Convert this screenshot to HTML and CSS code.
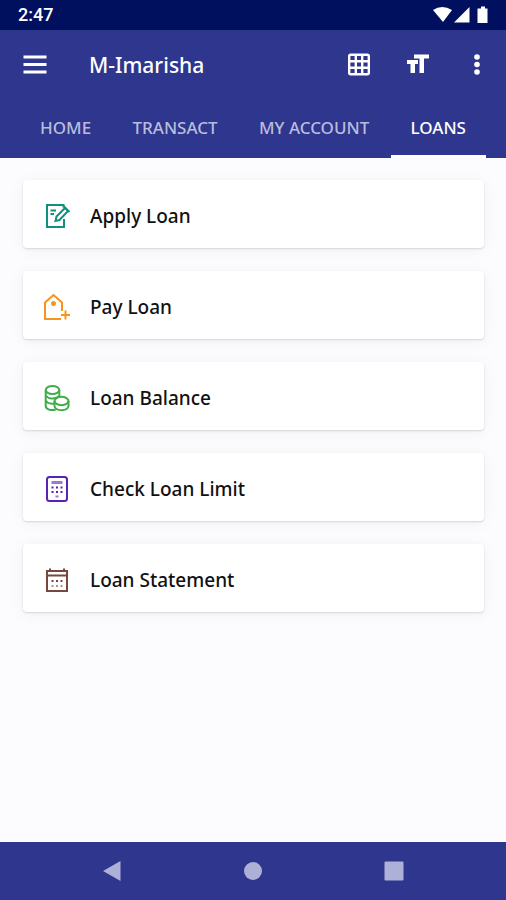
FILE: index.html
```html
<!DOCTYPE html>
<html lang="en">
<head>
<meta charset="utf-8">
<meta name="viewport" content="width=device-width, initial-scale=1">
<title>M-Imarisha</title>
<link rel="stylesheet" href="styles.css">
</head>
<body>
<div class="status">
  <span class="clock">2:47</span>
  <svg class="status-icons" width="58" height="18" viewBox="0 0 58 18" fill="#fff" aria-hidden="true">
    <path d="M1 4Q10-2 20 4L11 16Z"/>
    <path d="M22 16.500L37.500 1V16.500Z"/>
    <path d="M49 0.500h4v2h2.500v14.500h-10V2.500H49Z"/>
  </svg>
</div>
<header class="header">
  <div class="appbar">
    <button class="icon-btn" aria-label="Menu">
      <svg width="24" height="24" viewBox="0 0 24 24" fill="none" stroke="#fff" stroke-width="2.800"><path d="M0.500 4h23M0.500 11.500h23M0.500 19h23"/></svg>
    </button>
    <h1 class="title">M-Imarisha</h1>
    <button class="icon-btn" aria-label="Grid">
      <svg width="24" height="24" viewBox="0 0 24 24" fill="none" stroke="#fff" stroke-width="2.400"><rect x="2.200" y="1.700" width="19.600" height="19.600" rx="1.500"/><path d="M8.800 1.500v20M15.200 1.500v20M2 8.300h20M2 14.700h20"/></svg>
    </button>
    <button class="icon-btn" aria-label="Text size">
      <svg width="24" height="24" viewBox="0 0 24 24" fill="#fff"><path d="M8 1.500h15v4h-5v14.500h-4.500V5.500H8ZM1 7h11v4H9v9H4.500v-9H1Z"/></svg>
    </button>
    <button class="icon-btn" aria-label="More">
      <svg width="24" height="24" viewBox="0 0 24 24" fill="#fff"><circle cx="12" cy="4" r="2.800"/><circle cx="12" cy="11.500" r="2.800"/><circle cx="12" cy="19" r="2.800"/></svg>
    </button>
  </div>
  <nav class="tabs">
    <a class="tab" href="#home">HOME</a>
    <a class="tab" href="#transact">TRANSACT</a>
    <a class="tab" href="#account">MY ACCOUNT</a>
    <a class="tab active" href="#loans" aria-current="page">LOANS</a>
  </nav>
</header>
<main class="list">
  <button class="card">
    <svg class="card-icon teal" viewBox="0 0 28 28"><path d="M20.500 5.500V3H4v22h17v-8M7.500 8.500h5.500M7.500 12h3.500"/><path d="M12.500 19l1-4.500L22 6l3 3-8.500 9ZM20.500 4l6 6"/></svg>
    <span>Apply Loan</span>
  </button>
  <button class="card">
    <svg class="card-icon orange" viewBox="0 0 28 28"><path d="M18 26H2V9.500L10.500 2 19 9.500V18M18 22h9M22.500 17.500v9"/><circle cx="10.500" cy="10.500" r="1.500" fill="currentColor"/></svg>
    <span>Pay Loan</span>
  </button>
  <button class="card">
    <svg class="card-icon green" viewBox="0 0 28 28"><ellipse cx="9.500" cy="6" rx="6.800" ry="4"/><path d="M2.700 6v16c0 3.500 5.500 5 10 3.500M16.300 6v6.500M2.700 11c1.500 4 9 5 13.600 1M2.700 16c1 3 4.500 4 8.500 3.500M2.700 21"/><ellipse cx="18.500" cy="17" rx="7" ry="4.200"/><path d="M11.500 17v5c0 5.500 14 5.500 14 0v-5"/></svg>
    <span>Loan Balance</span>
  </button>
  <button class="card">
    <svg class="card-icon purple" viewBox="0 0 28 28"><rect x="4" y="2" width="20" height="24" rx="2.500"/><path class="pale" d="M8.500 7.500h11" stroke-width="3"/><path class="dots" d="M8.500 12.500h2M13 12.500h2M17.500 12.500h2M8.500 17h2M13 17h2M17.500 17h2"/><path class="pale" d="M12.500 21.500h3"/></svg>
    <span>Check Loan Limit</span>
  </button>
  <button class="card">
    <svg class="card-icon brown" viewBox="0 0 28 28"><path d="M4 5h20v20H4ZM4 9.500h20M7 2.500V6M21 2.500V6"/><path class="dots" d="M8.500 15h2M13 15h2M17.500 15h2"/><path class="dots pale" d="M8.500 20h2M13 20h2M17.500 20h2"/></svg>
    <span>Loan Statement</span>
  </button>
</main>
<footer class="navbar">
  <button class="nav-btn" aria-label="Back"><svg width="20" height="22" viewBox="0 0 20 22"><path d="M1 11L18.500 1v20Z"/></svg></button>
  <button class="nav-btn" aria-label="Home"><svg width="20" height="22" viewBox="0 0 20 22"><circle cx="10" cy="11" r="9"/></svg></button>
  <button class="nav-btn" aria-label="Recent apps"><svg width="20" height="22" viewBox="0 0 20 22"><rect x="0.500" y="1.500" width="19" height="19" rx="1"/></svg></button>
</footer>
</body>
</html>
```
FILE: styles.css
```css
* { box-sizing: border-box; }
body {
  margin: 0;
  min-height: 100vh;
  display: flex;
  flex-direction: column;
  background: #fcfcfe;
  font-family: "Noto Sans", "Open Sans", sans-serif;
  color: #111;
}
button {
  border: 0;
  padding: 0;
  background: none;
  font: inherit;
  color: inherit;
}
svg { display: block; flex: none; }
.status {
  display: flex;
  align-items: center;
  justify-content: space-between;
  height: 30px;
  padding: 0 16px 0 18px;
  background: #000f5e;
}
.clock {
  color: #fff;
  font: 500 18px/32px Roboto, sans-serif;
}
.header {
  background: #2e368d;
  color: #fff;
}
.appbar {
  display: flex;
  align-items: center;
  height: 70px;
  padding: 0 17px 0 23px;
}
.icon-btn + .icon-btn { margin-left: 35px; }
.title {
  flex: 1;
  margin: 0 0 0 42px;
  font-size: 21px;
  line-height: 28px;
  font-weight: 500;
}
.tabs {
  display: flex;
  height: 58px;
  padding: 0 20px;
  justify-content: space-between;
}
.tab {
  display: flex;
  align-items: center;
  padding: 0 20px;
  border-bottom: 3px solid transparent;
  color: #b9bddd;
  font-size: 17px;
  font-weight: 500;
  text-decoration: none;
  white-space: nowrap;
}
.tab.active {
  color: #fff;
  border-bottom-color: #fff;
}
.list {
  flex: 1;
  display: flex;
  flex-direction: column;
  gap: 23px;
  padding: 22px 22px 22px 23px;
}
.card {
  display: flex;
  align-items: center;
  gap: 19px;
  height: 68px;
  padding: 4px 20px 0;
  border-radius: 4px;
  background: #fff;
  box-shadow: 0 1px 2px rgba(30, 30, 60, 0.16), 0 2px 16px rgba(30, 30, 80, 0.05);
  font-size: 19px;
  font-weight: 500;
  text-align: left;
}
.card-icon {
  width: 28px;
  height: 28px;
  fill: none;
  stroke: currentColor;
  stroke-width: 2;
}
.dots { stroke-width: 2; }
.pale { opacity: 0.6; }
.teal { color: #12907f; }
.orange { color: #f7941d; }
.green { color: #3fae49; }
.purple { color: #5a22b0; }
.brown { color: #74483f; }
.navbar {
  display: flex;
  justify-content: space-around;
  align-items: center;
  height: 58px;
  padding: 0 42px;
  background: #2e368d;
}
.nav-btn svg { fill: #adb1d8; }
```
